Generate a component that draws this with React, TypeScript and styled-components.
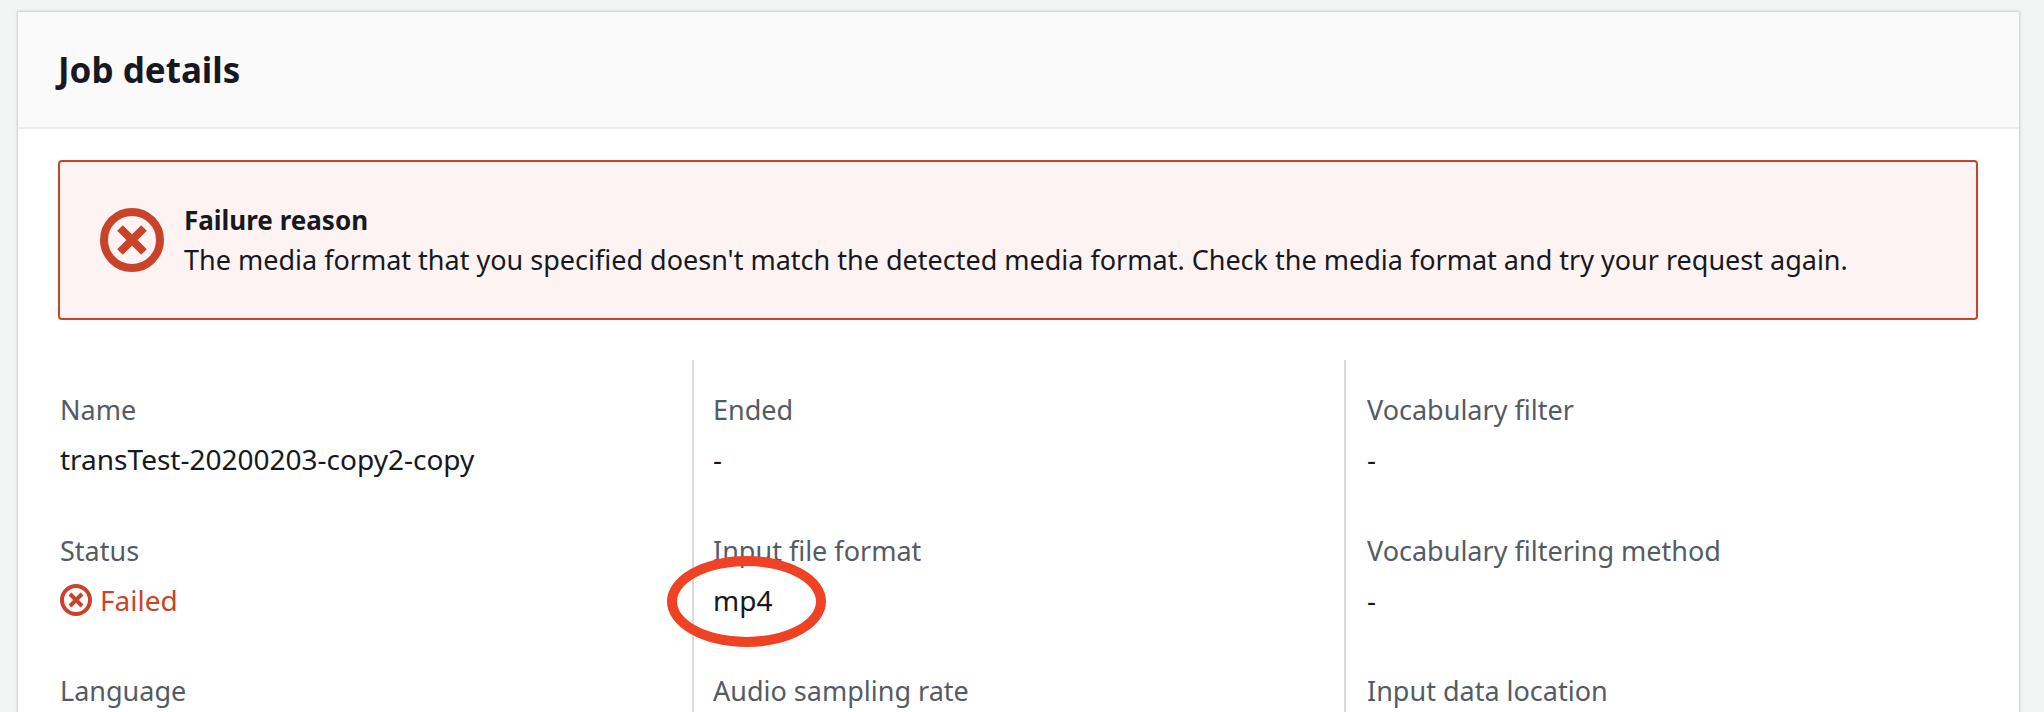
import styled, { createGlobalStyle } from 'styled-components';

const GlobalStyle = createGlobalStyle`
  html, body {
    margin: 0;
    height: 712px;
    overflow: hidden;
    background: #f2f3f3;
    font-family: 'Noto Sans', 'Liberation Sans', sans-serif;
  }
`;

interface Field {
  label: string;
  value?: string;
  failed?: boolean;
  circled?: boolean;
}

const columns: Field[][] = [
  [
    { label: 'Name', value: 'transTest-20200203-copy2-copy' },
    { label: 'Status', value: 'Failed', failed: true },
    { label: 'Language' },
  ],
  [
    { label: 'Ended', value: '-' },
    { label: 'Input file format', value: 'mp4', circled: true },
    { label: 'Audio sampling rate' },
  ],
  [
    { label: 'Vocabulary filter', value: '-' },
    { label: 'Vocabulary filtering method', value: '-' },
    { label: 'Input data location' },
  ],
];

function ErrorIcon({ size }: { size: number }) {
  return (
    <svg width={size} height={size} viewBox="0 0 64 64" fill="none" stroke="#c9432a">
      <circle cx="32" cy="32" r="28" strokeWidth="8" />
      <path d="M20 20 L44 44 M44 20 L20 44" strokeWidth="8" />
    </svg>
  );
}

export default function App() {
  return (
    <S.Page>
      <GlobalStyle />
      <S.Card>
        <S.Header>
          <h2>Job details</h2>
        </S.Header>
        <S.Body>
          <S.Alert>
            <ErrorIcon size={64} />
            <S.AlertText>
              <strong>Failure reason</strong>
              <p>The media format that you specified doesn't match the detected media format. Check the media format and try your request again.</p>
            </S.AlertText>
          </S.Alert>
          <S.Columns>
            {columns.map((fields) => (
              <S.Column key={fields[0].label}>
                {fields.map((field) => (
                  <S.FieldBox key={field.label}>
                    <S.Label>{field.label}</S.Label>
                    {field.value && (
                      <S.Value $failed={field.failed}>
                        {field.failed && <ErrorIcon size={32} />}
                        {field.value}
                        {field.circled && <S.Circle />}
                      </S.Value>
                    )}
                  </S.FieldBox>
                ))}
              </S.Column>
            ))}
          </S.Columns>
        </S.Body>
      </S.Card>
    </S.Page>
  );
}

const S = {
  Page: styled.div`
    height: 712px;
    padding: 12px 25px 0 18px;
    box-sizing: border-box;
    overflow: hidden;
  `,
  Card: styled.div`
    height: 760px;
    background: #fff;
    box-shadow: 0 0 2px 1px rgba(0, 28, 36, 0.16);
  `,
  Header: styled.div`
    height: 117px;
    box-sizing: border-box;
    padding-left: 40px;
    display: flex;
    align-items: center;
    background: #fafafa;
    border-bottom: 2px solid #eaeded;
    h2 {
      margin: 0;
      font-size: 35px;
      line-height: 40px;
      font-weight: 700;
      color: #16191f;
    }
  `,
  Body: styled.div`
    padding: 31px 41px 0 40px;
  `,
  Alert: styled.div`
    height: 160px;
    box-sizing: border-box;
    display: flex;
    align-items: center;
    gap: 20px;
    padding-left: 40px;
    background: #fdf3f2;
    border: 2px solid #c9432a;
    border-radius: 4px;
  `,
  AlertText: styled.div`
    font-size: 27px;
    line-height: 40px;
    color: #16191f;
    strong {
      display: block;
      font-size: 26px;
      font-weight: 700;
    }
    p {
      margin: 0;
    }
  `,
  Columns: styled.div`
    display: grid;
    grid-template-columns: 634px 652px 1fr;
    margin-top: 40px;
  `,
  Column: styled.div`
    padding: 30px 0 0 19px;
    & + & {
      border-left: 2px solid #d5dbdb;
    }
    &:first-child {
      padding-left: 2px;
    }
    &:last-child {
      padding-left: 21px;
    }
  `,
  FieldBox: styled.div`
    height: 140.5px;
  `,
  Label: styled.div`
    font-size: 27px;
    line-height: 40px;
    color: #545b64;
  `,
  Value: styled.div<{ $failed?: boolean }>`
    position: relative;
    display: flex;
    align-items: center;
    gap: 8px;
    margin-top: 9px;
    font-size: 28px;
    line-height: 40px;
    color: ${(props) => (props.$failed ? '#c9432a' : '#16191f')};
  `,
  Circle: styled.span`
    position: absolute;
    left: -46px;
    top: -24px;
    width: 159px;
    height: 91px;
    box-sizing: border-box;
    border: 10px solid #ef4123;
    border-radius: 50%;
  `,
};
